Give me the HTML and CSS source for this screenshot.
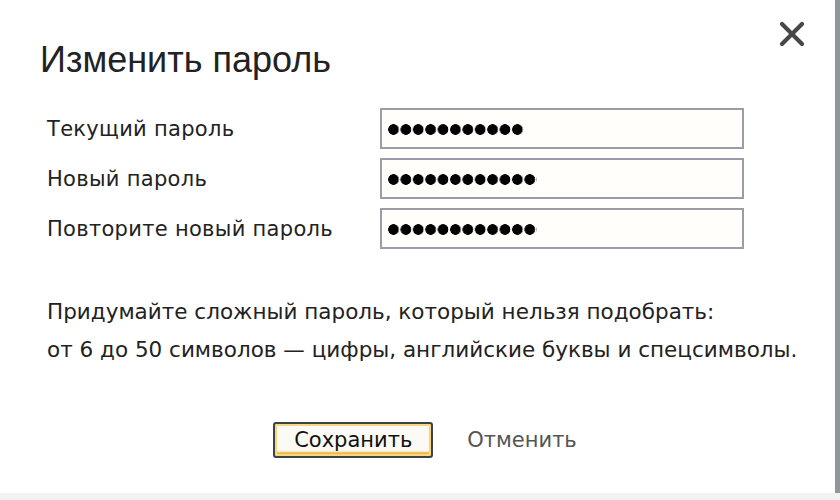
FILE: index.html
```html
<!DOCTYPE html>
<html lang="ru">
<head>
    <meta charset="UTF-8">
    <title>Изменить пароль</title>
    <link rel="stylesheet" href="styles.css">
</head>
<body>

    <!-- Окно смены пароля -->
    <div class="dialog">
        <button class="close" aria-label="Закрыть">
            <svg width="26" height="26" viewBox="0 0 26 26">
                <path d="M3 3 L23 23 M23 3 L3 23" stroke="#474747" stroke-width="4.2" stroke-linecap="round"/>
            </svg>
        </button>

        <h1 class="title">Изменить пароль</h1>

        <div class="form">
            <label class="label">Текущий пароль</label>
            <div class="field"><span class="dots d11"></span></div>

            <label class="label">Новый пароль</label>
            <div class="field"><span class="dots d12"></span></div>

            <label class="label">Повторите новый пароль</label>
            <div class="field"><span class="dots d12"></span></div>
        </div>

        <p class="hint">
            Придумайте сложный пароль, который нельзя подобрать:<br>
            от 6 до 50 символов — цифры, английские буквы и спецсимволы.
        </p>

        <div class="actions">
            <button class="save">Сохранить</button>
            <a href="#" class="cancel">Отменить</a>
        </div>
    </div>

</body>
</html>
```

FILE: styles.css
```css
/* Фон страницы */
body {
    margin: 0;
    background: #f2f2f2;
    font-family: "DejaVu Sans", Verdana, sans-serif;
    color: #222;
}

/* Окно */
.dialog {
    position: relative;
    width: 795px;
    height: 493px;
    padding: 0 0 0 40px;
    background: #fff;
    border-right: 5px solid #8e989b;
    box-sizing: content-box;
}

.close {
    position: absolute;
    top: 21px;
    right: 30px;
    padding: 0;
    border: none;
    background: none;
    cursor: pointer;
}

.title {
    margin: 0;
    padding-top: 40px;
    font-family: "Liberation Sans", Arial, sans-serif;
    font-size: 36px;
    line-height: 40px;
    font-weight: normal;
    color: #222;
}

/* Поля формы */
.form {
    display: grid;
    grid-template-columns: 333px 364px;
    row-gap: 9px;
    margin: 28px 0 0 7px;
    align-items: center;
}

.label {
    font-size: 21px;
    letter-spacing: 0.3px;
    color: #222;
}

.field {
    height: 41px;
    box-sizing: border-box;
    border: 2px solid #9c9ca8;
    background: #fffefb;
    display: flex;
    align-items: center;
    padding: 2px 0 0 6px;
}

.dots {
    height: 11px;
    background: radial-gradient(circle at 5.5px 5.5px, #000 5px, transparent 5.6px) 0 0 / 12.4px 11px repeat-x;
}

.d11 { width: 136px; }
.d12 { width: 149px; }

/* Подсказка */
.hint {
    margin: 44px 0 0 7px;
    font-size: 21.5px;
    line-height: 38px;
    color: #222;
}

/* Кнопки */
.actions {
    display: flex;
    justify-content: center;
    align-items: center;
    gap: 34px;
    margin: 53px 0 0 -40px;
    padding-left: 15px;
}

.save {
    width: 160px;
    height: 36px;
    border: 2px solid #3c414c;
    border-radius: 3px;
    background: #fbfaf5;
    box-shadow: inset 0 0 0 2px #f9d77c, inset 0 -3px 2px 1px #f0b43a;
    font-family: inherit;
    font-size: 21px;
    color: #111;
    cursor: pointer;
}

.cancel {
    font-size: 21px;
    color: #555;
    text-decoration: none;
}
```
